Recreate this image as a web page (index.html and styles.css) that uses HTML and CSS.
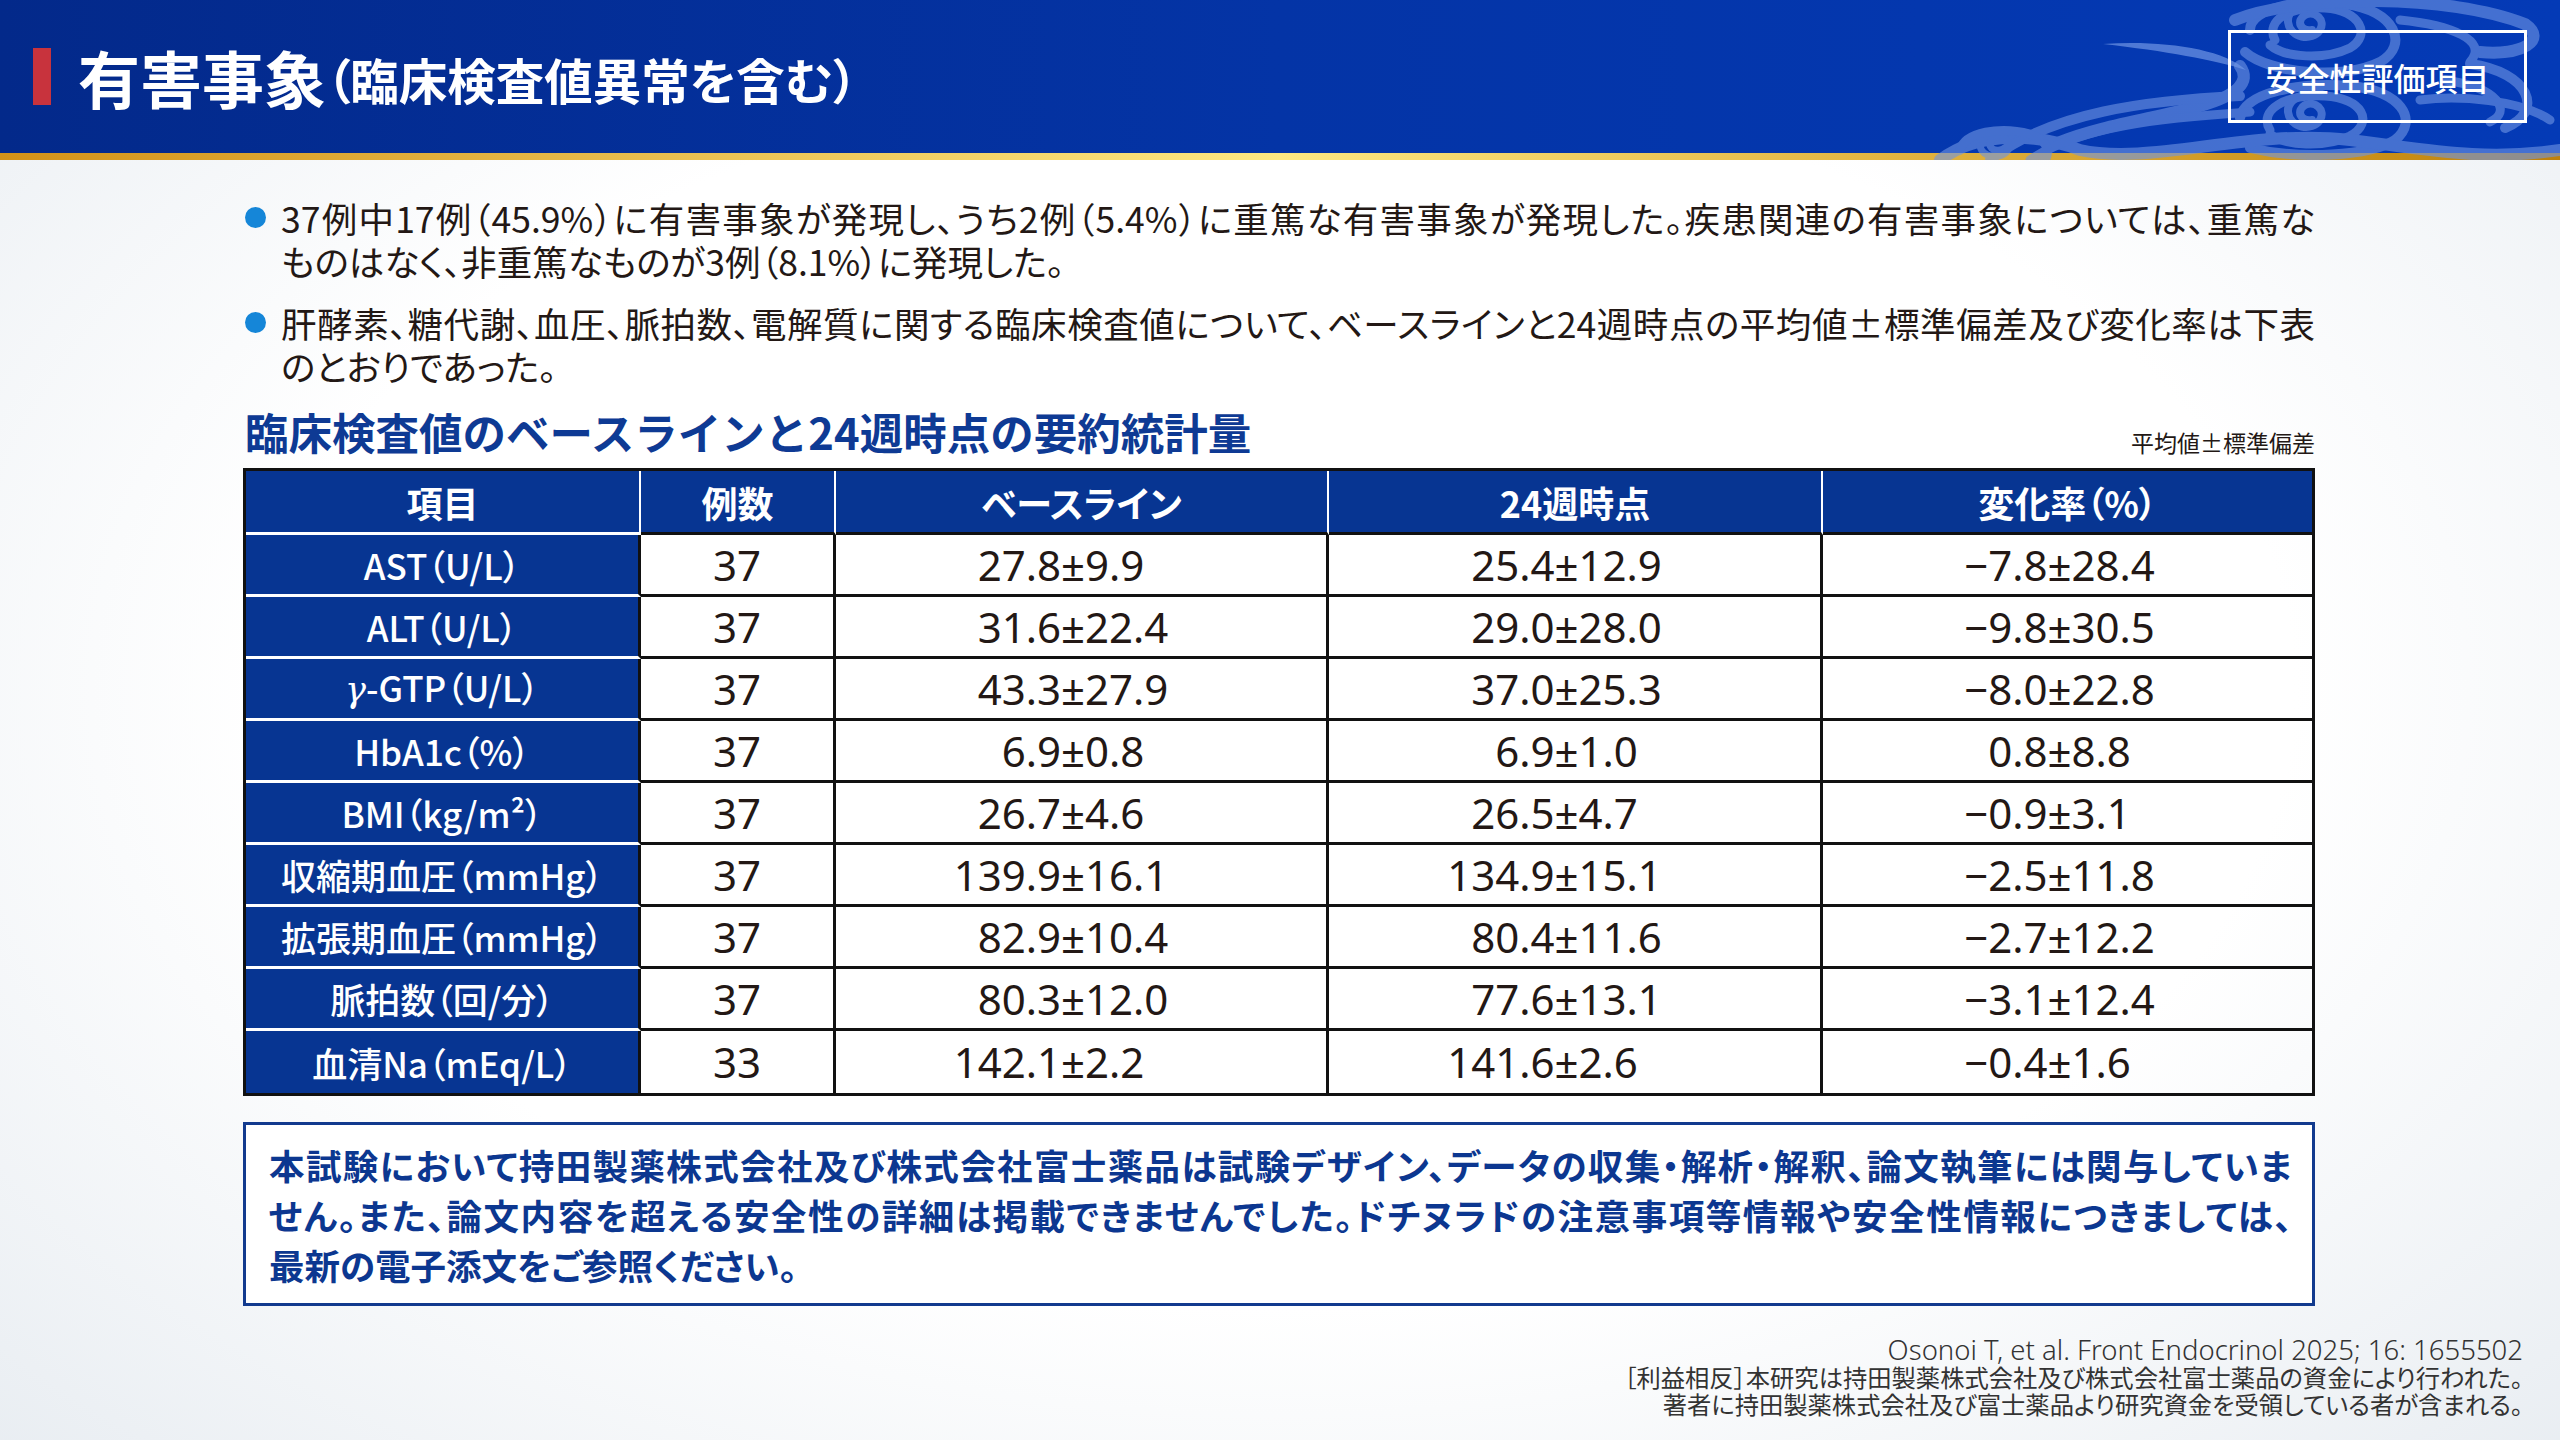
FILE: index.html
```html
<!DOCTYPE html>
<html lang="ja">
<head>
<meta charset="utf-8">
<title>有害事象（臨床検査値異常を含む）</title>
<link rel="stylesheet" href="styles.css">
</head>
<body>
<div class="slide">
  <div class="top">
    <header class="header">
      <div class="accent"></div>
      <h1 class="title"><span class="t-main">有害事象</span><span class="t-sub">（臨床検査値異常を含む）</span></h1>
      <div class="badge">安全性評価項目</div>
    </header>
    <div class="goldline"></div>
    <svg class="waves" viewBox="1900 0 660 160" xmlns="http://www.w3.org/2000/svg" aria-hidden="true">
      <g fill="none" stroke="#6f95e4" stroke-linecap="round" opacity="0.6">
        <path d="M2240,66 C2252,82 2236,96 2200,106 C2150,119 2100,126 2060,142" stroke-width="12"/>
        <path d="M2312,30 C2300,32 2296,20 2305,15 C2315,10 2326,20 2320,30 C2312,42 2290,38 2288,22 C2287,8 2305,0 2320,2" stroke-width="8"/>
        <path d="M2275,40 C2265,20 2290,6 2325,8 C2360,10 2372,35 2350,48 C2325,60 2285,58 2270,45" stroke-width="9"/>
        <path d="M2250,30 C2250,8 2300,-2 2345,4 C2395,10 2410,45 2380,62 C2345,80 2270,74 2245,52" stroke-width="10"/>
        <path d="M2235,20 C2300,-6 2450,-6 2525,24 C2548,40 2522,56 2480,52" stroke-width="12"/>
        <path d="M2400,20 C2450,25 2490,40 2470,62" stroke-width="9"/>
        <path d="M2312,120 C2300,122 2296,110 2305,105 C2315,100 2326,110 2320,120 C2312,132 2290,128 2288,112 C2287,98 2305,92 2322,94" stroke-width="8"/>
        <path d="M2270,130 C2258,110 2285,94 2325,96 C2362,98 2375,122 2350,136 C2325,148 2285,146 2270,134" stroke-width="9"/>
        <path d="M2240,118 C2245,92 2300,82 2350,86 C2400,90 2420,120 2395,140 C2370,156 2300,160 2250,148" stroke-width="10"/>
        <path d="M2470,64 C2530,72 2545,112 2505,128" stroke-width="10"/>
        <path d="M2445,80 C2500,88 2512,112 2490,122" stroke-width="9"/>
        <path d="M1940,160 C1980,130 2040,134 2080,150 C2150,166 2250,128 2350,140 C2420,148 2480,162 2560,150" stroke-width="12"/>
        <path d="M1990,160 C2050,112 2150,100 2240,96" stroke-width="10"/>
        <path d="M2030,160 C2080,126 2160,118 2250,112" stroke-width="9"/>
        <path d="M2000,150 C1990,152 1986,142 1994,138 C2003,134 2012,142 2008,150 C2002,160 1982,158 1980,146" stroke-width="7"/>
        <path d="M1960,150 C1965,132 2000,126 2030,134 C2050,140 2052,158 2040,164" stroke-width="9"/>
        <path d="M2420,100 C2460,95 2520,100 2550,120" stroke-width="9"/>
      </g>
      <path d="M2103,44 C2160,40 2222,48 2246,70 C2215,60 2165,51 2103,44 Z" fill="#6f95e4" opacity="0.7"/>
    </svg>
  </div>

  <main class="content">
    <ul class="bullets">
      <li><span class="dot"></span><p><span class="ln">37例中17例（45.9%）に有害事象が発現し、うち2例（5.4%）に重篤な有害事象が発現した。疾患関連の有害事象については、重篤な</span><span class="ln last">ものはなく、非重篤なものが3例（8.1%）に発現した。</span></p></li>
      <li><span class="dot"></span><p><span class="ln">肝酵素、糖代謝、血圧、脈拍数、電解質に関する臨床検査値について、ベースラインと24週時点の平均値±標準偏差及び変化率は下表</span><span class="ln last">のとおりであった。</span></p></li>
    </ul>

    <div class="sec-head">
      <h2>臨床検査値のベースラインと24週時点の要約統計量</h2>
      <span class="unit">平均値±標準偏差</span>
    </div>

    <table class="stats">
      <colgroup>
        <col class="c1"><col class="c2"><col class="c3"><col class="c4"><col class="c5">
      </colgroup>
      <thead>
        <tr><th>項目</th><th>例数</th><th>ベースライン</th><th>24週時点</th><th>変化率（%）</th></tr>
      </thead>
      <tbody>
        <tr><th>AST（U/L）</th><td>37</td><td><span class="l">27.8</span>±<span class="r">9.9</span></td><td><span class="l">25.4</span>±<span class="r">12.9</span></td><td><span class="l">−7.8</span>±<span class="r">28.4</span></td></tr>
        <tr><th>ALT（U/L）</th><td>37</td><td><span class="l">31.6</span>±<span class="r">22.4</span></td><td><span class="l">29.0</span>±<span class="r">28.0</span></td><td><span class="l">−9.8</span>±<span class="r">30.5</span></td></tr>
        <tr><th><i class="gamma">γ</i>-GTP（U/L）</th><td>37</td><td><span class="l">43.3</span>±<span class="r">27.9</span></td><td><span class="l">37.0</span>±<span class="r">25.3</span></td><td><span class="l">−8.0</span>±<span class="r">22.8</span></td></tr>
        <tr><th>HbA1c（%）</th><td>37</td><td><span class="l">6.9</span>±<span class="r">0.8</span></td><td><span class="l">6.9</span>±<span class="r">1.0</span></td><td><span class="l">0.8</span>±<span class="r">8.8</span></td></tr>
        <tr><th>BMI（kg/m²）</th><td>37</td><td><span class="l">26.7</span>±<span class="r">4.6</span></td><td><span class="l">26.5</span>±<span class="r">4.7</span></td><td><span class="l">−0.9</span>±<span class="r">3.1</span></td></tr>
        <tr><th>収縮期血圧（mmHg）</th><td>37</td><td><span class="l">139.9</span>±<span class="r">16.1</span></td><td><span class="l">134.9</span>±<span class="r">15.1</span></td><td><span class="l">−2.5</span>±<span class="r">11.8</span></td></tr>
        <tr><th>拡張期血圧（mmHg）</th><td>37</td><td><span class="l">82.9</span>±<span class="r">10.4</span></td><td><span class="l">80.4</span>±<span class="r">11.6</span></td><td><span class="l">−2.7</span>±<span class="r">12.2</span></td></tr>
        <tr><th>脈拍数（回/分）</th><td>37</td><td><span class="l">80.3</span>±<span class="r">12.0</span></td><td><span class="l">77.6</span>±<span class="r">13.1</span></td><td><span class="l">−3.1</span>±<span class="r">12.4</span></td></tr>
        <tr><th>血清Na（mEq/L）</th><td>33</td><td><span class="l">142.1</span>±<span class="r">2.2</span></td><td><span class="l">141.6</span>±<span class="r">2.6</span></td><td><span class="l">−0.4</span>±<span class="r">1.6</span></td></tr>
      </tbody>
    </table>

    <div class="notice">
      <span class="ln">本試験において持田製薬株式会社及び株式会社富士薬品は試験デザイン、データの収集・解析・解釈、論文執筆には関与していま</span>
      <span class="ln">せん。また、論文内容を超える安全性の詳細は掲載できませんでした。ドチヌラドの注意事項等情報や安全性情報につきましては、</span>
      <span class="ln last">最新の電子添文をご参照ください。</span>
    </div>
  </main>

  <footer class="refs">
    <p class="cite">Osonoi T, et al. Front Endocrinol 2025; 16: 1655502</p>
    <p>［利益相反］本研究は持田製薬株式会社及び株式会社富士薬品の資金により行われた。</p>
    <p>著者に持田製薬株式会社及び富士薬品より研究資金を受領している者が含まれる。</p>
  </footer>
</div>
</body>
</html>
```

FILE: styles.css
```css
* { box-sizing: border-box; margin: 0; padding: 0; }

html, body {
  width: 2560px;
  height: 1440px;
  overflow: hidden;
}

body {
  font-family: "Noto Sans CJK JP", "Noto Sans", sans-serif;
  color: #231815;
  font-feature-settings: "palt";
  background: radial-gradient(ellipse 72% 78% at 50% 48%, #ffffff 55%, #e7ecf1 100%);
}

.slide {
  width: 2560px;
  height: 1440px;
}

/* justified fixed lines */
.ln {
  display: block;
  white-space: nowrap;
  text-align: justify;
  text-align-last: justify;
}

.ln.last {
  text-align-last: auto;
}

/* ---------- header ---------- */
.top {
  position: relative;
  height: 160px;
}

.header {
  height: 153px;
  display: flex;
  align-items: center;
  padding: 0 33px;
  background: linear-gradient(90deg, #03298a 0%, #0434a6 50%, #043ab6 100%);
}

.accent {
  flex: none;
  width: 18px;
  height: 57px;
  background: #c8333d;
  margin-right: 27px;
}

.title {
  display: flex;
  align-items: center;
  color: #ffffff;
  font-weight: 700;
}

.t-main {
  font-size: 62px;
  line-height: 1;
}

.t-sub {
  font-size: 48.5px;
  line-height: 1;
  margin-top: 5px;
}

.badge {
  position: relative;
  z-index: 2;
  margin-left: auto;
  width: 299px;
  height: 93px;
  border: 3px solid #ffffff;
  color: #ffffff;
  font-size: 32px;
  font-weight: 500;
  display: flex;
  align-items: center;
  justify-content: center;
}

.goldline {
  height: 7px;
  background: linear-gradient(90deg, #d39218 0%, #fde882 50%, #e4b845 72%, #bf810a 100%);
}

.waves {
  position: absolute;
  top: 0;
  right: 0;
  width: 660px;
  height: 160px;
  z-index: 1;
  pointer-events: none;
}

/* ---------- content ---------- */
.content {
  padding: 36px 245px 0 243px;
}

.bullets {
  list-style: none;
}

.bullets li {
  display: flex;
  gap: 15px;
  margin-bottom: 19px;
}

.bullets li:last-child {
  margin-bottom: 0;
}

.dot {
  flex: none;
  width: 21px;
  height: 21px;
  margin: 11px 0 0 2px;
  border-radius: 50%;
  background: #1586d8;
}

.bullets p {
  flex: 1;
  font-size: 35.5px;
  line-height: 43px;
}

.sec-head {
  margin-top: 20px;
  display: flex;
  justify-content: space-between;
  align-items: flex-end;
}

.sec-head h2 {
  font-size: 43.5px;
  line-height: 50px;
  font-weight: 700;
  color: #0e3a94;
  padding-left: 2px;
  font-feature-settings: normal;
}

.unit {
  font-size: 23px;
  line-height: 30px;
}

/* ---------- table ---------- */
.stats {
  margin-top: 11px;
  width: 2072px;
  table-layout: fixed;
  border-collapse: separate;
  border-spacing: 0;
  border: 3px solid #111111;
}

.c1 { width: 395px; }
.c2 { width: 195px; }
.c3 { width: 493px; }
.c4 { width: 494px; }
.c5 { width: 489px; }

.stats th,
.stats td {
  text-align: center;
  vertical-align: middle;
  line-height: 1;
  padding: 0;
  white-space: nowrap;
}

.stats thead th {
  height: 64px;
  background: #073592;
  color: #ffffff;
  font-size: 36px;
  font-weight: 700;
  border-right: 2px solid #ffffff;
  border-bottom: 3px solid #111111;
}

.stats thead th:first-child {
  border-bottom-color: #ffffff;
}

.stats thead th:last-child {
  border-right: none;
}

.stats tbody th {
  height: 62px;
  background: #073592;
  color: #ffffff;
  font-size: 35px;
  font-weight: 500;
  border-bottom: 3px solid #ffffff;
  border-right: 3px solid #111111;
}

.stats tbody td {
  height: 62px;
  font-family: "Noto Sans", "Noto Sans CJK JP", sans-serif;
  font-size: 42px;
  font-weight: 400;
  border-right: 3px solid #111111;
  border-bottom: 3px solid #111111;
}

.stats tbody td:last-child {
  border-right: none;
}

.stats tbody tr:last-child th,
.stats tbody tr:last-child td {
  border-bottom: none;
}

.stats .l {
  display: inline-block;
  width: 110px;
  text-align: right;
}

.stats .r {
  display: inline-block;
  width: 126px;
  text-align: left;
}

.gamma {
  font-family: "DejaVu Serif", serif;
  font-style: italic;
  font-weight: 400;
}

/* ---------- notice ---------- */
.notice {
  margin-top: 26px;
  border: 3px solid #123a8e;
  background: #ffffff;
  padding: 15px 20px 13px 23px;
  color: #0c3790;
  font-size: 35.5px;
  font-weight: 700;
  line-height: 50px;
}

/* ---------- footer ---------- */
.refs {
  margin-top: 30px;
  padding-right: 37px;
  text-align: right;
  font-size: 24.3px;
  line-height: 27px;
  color: #333333;
}

.refs .cite {
  font-family: "Noto Sans", sans-serif;
  font-size: 27.5px;
  font-weight: 300;
}
```
